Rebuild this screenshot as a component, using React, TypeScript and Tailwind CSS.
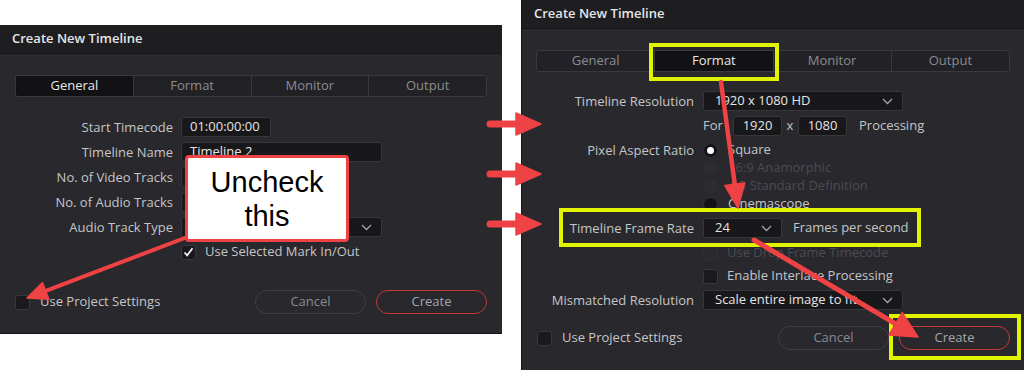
import React from "react";

function Chevron() {
  return (
    <svg width="11" height="7" viewBox="0 0 11 7" className="shrink-0">
      <polyline points="1,1 5.5,5.5 10,1" fill="none" stroke="#a3a3a8" strokeWidth="1.3" />
    </svg>
  );
}

function Tabs({ active }: { active: string }) {
  const tabs = ["General", "Format", "Monitor", "Output"];
  return (
    <div className="flex h-[22px] overflow-hidden rounded-[3px] border border-[#39393f] bg-[#222226]">
      {tabs.map((t, i) => (
        <div
          key={t}
          className={
            "flex flex-1 items-center justify-center text-[13px] " +
            (i > 0 ? "border-l border-[#39393f] " : "") +
            (t === active ? "bg-[#121214] text-[#e8e8e8]" : "text-[#8b8b90]")
          }
        >
          {t}
        </div>
      ))}
    </div>
  );
}

function Label({ children }: { children?: React.ReactNode }) {
  return <div className="w-[158px] shrink-0 whitespace-nowrap text-right text-[13px] leading-none text-[#c6c6c8]">{children}</div>;
}

function Field({ w, children, center }: { w: string; children?: React.ReactNode; center?: boolean }) {
  return (
    <div
      className={
        "flex h-5 items-center rounded-[3px] border border-[#36363b] bg-[#18181a] px-2 text-[13px] text-[#e4e4e6] " +
        w +
        (center ? " justify-center" : "")
      }
    >
      {children}
    </div>
  );
}

function Dropdown({ w, value }: { w: string; value: string }) {
  return (
    <div
      className={
        "flex h-5 shrink-0 items-center justify-between rounded-[3px] border border-[#36363b] bg-[#18181a] pl-[11px] pr-[9px] text-[13px] text-[#e4e4e6] " +
        w
      }
    >
      <span className="whitespace-nowrap">{value}</span>
      <Chevron />
    </div>
  );
}

function Check({ checked, disabled }: { checked?: boolean; disabled?: boolean }) {
  return (
    <div
      className={
        "flex h-[15px] w-[15px] shrink-0 items-center justify-center rounded-[3px] border " +
        (disabled ? "border-[#2e2e33] bg-[#2a2a2f]" : "border-[#38383d] bg-[#1a1a1c]")
      }
    >
      {checked ? (
        <svg width="11" height="10" viewBox="0 0 11 10">
          <polyline points="1.5,5.5 4.2,8.3 9.5,1.2" fill="none" stroke="#f2f2f2" strokeWidth="1.8" />
        </svg>
      ) : null}
    </div>
  );
}

function Radio({ on, disabled }: { on?: boolean; disabled?: boolean }) {
  return (
    <div
      className={
        "flex h-[15px] w-[15px] shrink-0 items-center justify-center rounded-full " +
        (disabled ? "bg-[#2c2c31]" : "border border-[#333338] bg-[#141416]")
      }
    >
      {on ? <div className="h-[7px] w-[7px] rounded-full bg-white" /> : null}
    </div>
  );
}

function TitleBar() {
  return (
    <div className="flex h-[29px] shrink-0 items-center border-b border-[#141416] bg-[#1e1e21] pl-3 text-[13px] font-semibold text-[#e6e6e8]">
      Create New Timeline
    </div>
  );
}

function Buttons() {
  return (
    <div className="flex gap-[10px]">
      <div className="flex h-[24px] w-[111px] items-center justify-center rounded-full border border-[#3e3e44] text-[13px] text-[#8a8a8f]">
        Cancel
      </div>
      <div className="flex h-[24px] w-[111px] items-center justify-center rounded-full border border-[#c2383b] text-[13px] text-[#a6a6aa]">
        Create
      </div>
    </div>
  );
}

function LeftDialog() {
  return (
    <div className="mt-[25px] flex h-[309px] w-[502px] shrink-0 flex-col border-b border-[#151517] bg-[#28282d]">
      <TitleBar />
      <div className="flex flex-1 flex-col px-[15px] pb-[19px] pt-[21px]">
        <Tabs active="General" />
        <div className="mt-[20px] flex flex-col gap-[5px]">
          <div className="flex h-5 items-center gap-2">
            <Label>Start Timecode</Label>
            <Field w="w-[90px]">01:00:00:00</Field>
          </div>
          <div className="flex h-5 items-center gap-2">
            <Label>Timeline Name</Label>
            <Field w="w-[201px]">Timeline 2</Field>
          </div>
          <div className="flex h-5 items-center gap-2">
            <Label>No. of Video Tracks</Label>
            <Field w="w-[40px]">1</Field>
          </div>
          <div className="flex h-5 items-center gap-2">
            <Label>No. of Audio Tracks</Label>
            <Field w="w-[40px]">1</Field>
          </div>
          <div className="flex h-5 items-center gap-2">
            <Label>Audio Track Type</Label>
            <Dropdown w="w-[201px]" value="Stereo" />
          </div>
          <div className="flex h-5 items-center gap-2">
            <Label />
            <div className="flex items-center gap-[9px] text-[13px] text-[#c6c6c8]">
              <Check checked />
              <span>Use Selected Mark In/Out</span>
            </div>
          </div>
        </div>
        <div className="mt-auto flex h-[24px] items-center justify-between">
          <div className="flex items-center gap-[10px] text-[13px] text-[#c6c6c8]">
            <Check />
            <span>Use Project Settings</span>
          </div>
          <Buttons />
        </div>
      </div>
    </div>
  );
}

function RightDialog() {
  return (
    <div className="flex h-[370px] w-[503px] shrink-0 flex-col border-l border-[#151517] bg-[#28282d]">
      <TitleBar />
      <div className="flex flex-1 flex-col pb-[20px] pl-[14px] pr-[14px] pt-[21px]">
        <Tabs active="Format" />
        <div className="mt-[19px] flex flex-col">
          <div className="flex h-5 items-center gap-[9px]">
            <Label>Timeline Resolution</Label>
            <Dropdown w="w-[200px]" value="1920 x 1080 HD" />
          </div>
          <div className="mt-[5px] flex h-5 items-center gap-[9px]">
            <Label />
            <div className="flex items-center text-[13px] text-[#c6c6c8]">
              <span className="w-[30px]">For</span>
              <Field w="w-[49px]" center>1920</Field>
              <span className="w-[16px] text-center">x</span>
              <Field w="w-[49px]" center>1080</Field>
              <span className="ml-[12px]">Processing</span>
            </div>
          </div>
          <div className="mt-[5px] flex flex-col">
            <div className="flex h-[18px] items-center gap-[9px]">
              <Label>Pixel Aspect Ratio</Label>
              <div className="flex items-center gap-[10px] text-[13px] text-[#c6c6c8]">
                <Radio on />
                <span>Square</span>
              </div>
            </div>
            <div className="flex h-[18px] items-center gap-[9px]">
              <Label />
              <div className="flex items-center gap-[10px] text-[13px] text-[#4b4b51]">
                <Radio disabled />
                <span>16:9 Anamorphic</span>
              </div>
            </div>
            <div className="flex h-[18px] items-center gap-[9px]">
              <Label />
              <div className="flex items-center gap-[10px] text-[13px] text-[#4b4b51]">
                <Radio disabled />
                <span>4:3 Standard Definition</span>
              </div>
            </div>
            <div className="flex h-[18px] items-center gap-[9px]">
              <Label />
              <div className="flex items-center gap-[10px] text-[13px] text-[#c6c6c8]">
                <Radio />
                <span>Cinemascope</span>
              </div>
            </div>
          </div>
          <div className="mt-[5px] flex h-5 items-center gap-[9px]">
            <Label>Timeline Frame Rate</Label>
            <Dropdown w="w-[79px]" value="24" />
            <span className="ml-[2px] text-[13px] text-[#c6c6c8]">Frames per second</span>
          </div>
          <div className="mt-[5px] flex h-5 items-center gap-[9px]">
            <Label />
            <div className="flex items-center gap-[9px] text-[13px] text-[#4b4b51]">
              <Check disabled />
              <span>Use Drop Frame Timecode</span>
            </div>
          </div>
          <div className="mt-[3px] flex h-5 items-center gap-[9px]">
            <Label />
            <div className="flex items-center gap-[9px] text-[13px] text-[#c6c6c8]">
              <Check />
              <span>Enable Interlace Processing</span>
            </div>
          </div>
          <div className="mt-[4px] flex h-5 items-center gap-[9px]">
            <Label>Mismatched Resolution</Label>
            <Dropdown w="w-[200px]" value="Scale entire image to fit" />
          </div>
        </div>
        <div className="mt-auto flex h-[24px] items-center justify-between pl-[1px]">
          <div className="flex items-center gap-[10px] text-[13px] text-[#c6c6c8]">
            <Check />
            <span>Use Project Settings</span>
          </div>
          <Buttons />
        </div>
      </div>
    </div>
  );
}

function Arrow({ x1, y1, x2, y2, w, hl, hw }: { x1: number; y1: number; x2: number; y2: number; w: number; hl: number; hw: number }) {
  const dx = x2 - x1;
  const dy = y2 - y1;
  const len = Math.sqrt(dx * dx + dy * dy);
  const ux = dx / len;
  const uy = dy / len;
  const nx = -uy;
  const ny = ux;
  const bx = x2 - ux * hl;
  const by = y2 - uy * hl;
  const pts = `${x2},${y2} ${bx + nx * hw},${by + ny * hw} ${bx - nx * hw},${by - ny * hw}`;
  return (
    <g>
      <line x1={x1} y1={y1} x2={bx + ux * 2} y2={by + uy * 2} stroke="#ee4244" strokeWidth={w} strokeLinecap="round" />
      <polygon points={pts} fill="#ee4244" stroke="#ee4244" strokeWidth="1.5" strokeLinejoin="round" />
    </g>
  );
}

export default function App() {
  return (
    <div className="relative flex h-[370px] w-[1024px] gap-[19px] overflow-hidden bg-white font-['Open_Sans','Noto_Sans',sans-serif]">
      <LeftDialog />
      <RightDialog />

      <div className="pointer-events-none absolute left-[649px] top-[43px] h-[38px] w-[130px] border-4 border-[#e2f300]" />
      <div className="pointer-events-none absolute left-[559px] top-[208px] h-[39px] w-[362px] border-4 border-[#e2f300]" />
      <div className="pointer-events-none absolute left-[889px] top-[314px] h-[46px] w-[132px] border-4 border-[#e2f300]" />

      <svg className="pointer-events-none absolute left-0 top-0" width="1024" height="370" viewBox="0 0 1024 370">
        <Arrow x1={490} y1={124} x2={541} y2={124} w={7} hl={25} hw={11} />
        <Arrow x1={490} y1={174} x2={541} y2={174} w={7} hl={25} hw={11} />
        <Arrow x1={490} y1={224} x2={541} y2={224} w={7} hl={25} hw={11} />
        <Arrow x1={190} y1={236} x2={27} y2={298} w={4} hl={20} hw={9} />
        <Arrow x1={721} y1={82} x2={738} y2={208} w={4.5} hl={24} hw={10} />
        <Arrow x1={754} y1={240} x2={918} y2={337} w={5} hl={26} hw={13} />
      </svg>

      <div className="absolute left-[185px] top-[155px] flex h-[87px] w-[164px] flex-col items-center justify-center rounded-[4px] border-[3px] border-[#ee4244] bg-white font-['Liberation_Sans',Arial,sans-serif] text-[29px] leading-[34px] text-black">
        <span>Uncheck</span>
        <span>this</span>
      </div>
    </div>
  );
}
